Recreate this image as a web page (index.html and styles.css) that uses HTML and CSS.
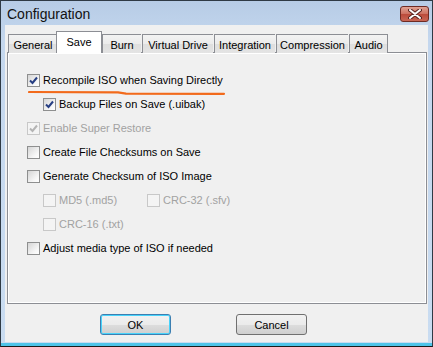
FILE: index.html
```html
<!DOCTYPE html>
<html lang="en">
  <head>
    <meta charset="UTF-8" />
    <title>Configuration</title>
    <link rel="stylesheet" href="styles.css">
  </head>
  <body>
    <div class="window">
      <div class="titlebar">
        <span class="title">Configuration</span>
        <button class="close" aria-label="Close">
          <svg width="14" height="10" viewBox="0 0 14 10">
            <path d="M2 1 L12 9 M12 1 L2 9" stroke="#5a2520" stroke-width="4" stroke-linecap="round" />
            <path d="M2 1 L12 9 M12 1 L2 9" stroke="#ffffff" stroke-width="2" stroke-linecap="round" />
          </svg>
        </button>
      </div>
      <div class="client">
        <ul class="tabs">
          <li class="tab t-general">General</li>
          <li class="tab t-save active">Save</li>
          <li class="tab t-burn">Burn</li>
          <li class="tab t-vd">Virtual Drive</li>
          <li class="tab t-int">Integration</li>
          <li class="tab t-comp">Compression</li>
          <li class="tab t-audio">Audio</li>
        </ul>
        <div class="panel">
          <svg class="mark" width="200" height="6" viewBox="0 0 200 6">
            <path d="M1 2 L90 2.3 L98 3.6 L196 3.8" fill="none" stroke="#f26a1b" stroke-width="2.2" stroke-linecap="round" />
          </svg>
          <div class="row"><span class="box checked"></span>Recompile ISO when Saving Directly</div>
          <div class="row sub"><span class="box checked"></span>Backup Files on Save (.uibak)</div>
          <div class="row off"><span class="box checked"></span>Enable Super Restore</div>
          <div class="row"><span class="box"></span>Create File Checksums on Save</div>
          <div class="row"><span class="box"></span>Generate Checksum of ISO Image</div>
          <div class="row sub off pair">
            <span class="cell"><span class="box"></span>MD5 (.md5)</span>
            <span class="cell"><span class="box"></span>CRC-32 (.sfv)</span>
          </div>
          <div class="row sub off"><span class="box"></span>CRC-16 (.txt)</div>
          <div class="row"><span class="box"></span>Adjust media type of ISO if needed</div>
        </div>
        <div class="buttons">
          <button class="btn default">OK</button>
          <button class="btn">Cancel</button>
        </div>
      </div>
    </div>
  </body>
</html>
```

FILE: styles.css
```css
body {
  margin: 0;
  font-family: "Liberation Sans", Arial, sans-serif;
  font-size: 11px;
  background: #ffffff;
}

.window {
  box-sizing: border-box;
  width: 433px;
  height: 347px;
  border: 1px solid #2f3a45;
  border-bottom-color: #1a1a1a;
  background: linear-gradient(#b7cce6, #c4d7ee 40px, #c9dcf1);
  display: flex;
  flex-direction: column;
  padding: 0 4px 0 4px;
  box-shadow: inset 0 -3px 0 #4ec4e8;
}

.titlebar {
  height: 24px;
  display: flex;
  align-items: center;
  justify-content: space-between;
}

.title {
  font-family: "Liberation Sans", Arial, sans-serif;
  font-size: 14px;
  color: #111;
  padding-left: 2px;
  padding-top: 1px;
}

.close {
  width: 29px;
  height: 16px;
  margin-right: -1px;
  margin-top: 2px;
  border: 1px solid #6e2b24;
  border-radius: 3px;
  background: linear-gradient(#e0a394, #cd6f5f 50%, #bb4a3a 51%, #c86655);
  display: flex;
  align-items: center;
  justify-content: center;
  padding: 0;
}

.client {
  flex: 1;
  background: #f0f0f0;
  margin-bottom: 4px;
  padding: 6px 1px 0 2px;
  display: flex;
  flex-direction: column;
}

.tabs {
  list-style: none;
  margin: 0 0 -1px 0;
  padding: 0 0 0 1px;
  display: flex;
  align-items: flex-end;
  position: relative;
  z-index: 1;
}

.tab {
  box-sizing: border-box;
  height: 19px;
  border: 1px solid #8c8e94;
  border-bottom: none;
  border-right: none;
  background: linear-gradient(#f3f3f3, #ebebeb 50%, #dedede 51%, #e4e4e4);
  color: #000;
  display: flex;
  align-items: center;
  justify-content: center;
  padding-top: 1px;
}

.tab + .tab {
  margin-left: 1px;
}

.t-general { width: 49px; }
.t-save { width: 46px; }
.t-burn { width: 39px; }
.t-vd { width: 71px; }
.t-int { width: 61px; }
.t-comp { width: 72px; }
.t-audio { width: 39px; border-right: 1px solid #8c8e94; }

.tab.active {
  height: 22px;
  background: #ffffff;
  border: 1px solid #8c8e94;
  border-bottom: none;
  margin: 0 -2px 0 -1px;
  padding-bottom: 3px;
  position: relative;
  z-index: 2;
}

.tab.active + .tab {
  margin-left: 2px;
}

.panel {
  box-sizing: border-box;
  height: 252px;
  border: 1px solid #8c8e94;
  box-shadow: inset 1px 1px 0 #ffffff, inset -1px -1px 0 #ffffff;
  background: #f0f0f0;
  padding: 15px 0 0 19px;
  position: relative;
}

.mark {
  position: absolute;
  left: 20px;
  top: 37px;
}

.row {
  height: 24px;
  display: flex;
  align-items: center;
  color: #000;
}

.row.sub {
  padding-left: 16px;
}

.row.off {
  color: #a2a2a2;
}

.cell {
  display: flex;
  align-items: center;
  width: 104px;
}

.box {
  box-sizing: border-box;
  width: 13px;
  height: 13px;
  border: 1px solid #8e8f8f;
  background: linear-gradient(135deg, #d5d5d5, #f7f7f7 70%, #ffffff);
  margin-right: 3px;
  position: relative;
}

.box.checked::after {
  content: "";
  position: absolute;
  left: 1px;
  top: 1px;
  width: 9px;
  height: 9px;
  background: url("data:image/svg+xml,%3Csvg xmlns='http://www.w3.org/2000/svg' width='9' height='9' viewBox='0 0 9 9'%3E%3Cpath d='M1 4.5 L3.5 7 L8 1.5' fill='none' stroke='%23273f83' stroke-width='2'/%3E%3C/svg%3E") no-repeat;
}

.off .box {
  border-color: #c8c8c8;
  background: #f4f4f4;
}

.off .box.checked::after {
  background: url("data:image/svg+xml,%3Csvg xmlns='http://www.w3.org/2000/svg' width='9' height='9' viewBox='0 0 9 9'%3E%3Cpath d='M1 4.5 L3.5 7 L8 1.5' fill='none' stroke='%23b4b4b4' stroke-width='2'/%3E%3C/svg%3E") no-repeat;
}

.buttons {
  display: flex;
  gap: 65px;
  padding: 10px 0 0 93px;
}

.btn {
  box-sizing: border-box;
  width: 71px;
  height: 21px;
  border: 1px solid #707070;
  border-radius: 3px;
  background: linear-gradient(#f2f2f2, #ebebeb 50%, #dddddd 51%, #cfcfcf);
  font-family: "Liberation Sans", Arial, sans-serif;
  font-size: 11px;
  color: #000;
  padding: 0;
}

.btn.default {
  border-color: #3c7fb1;
  box-shadow: inset 0 0 0 1px #48d3fb;
}
```
